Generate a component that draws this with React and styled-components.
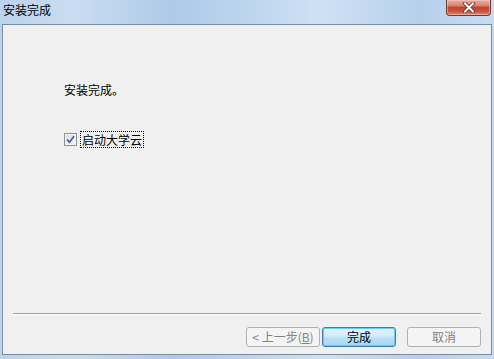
import React from 'react';
import styled, { createGlobalStyle } from 'styled-components';

const Global = createGlobalStyle`
  html, body { margin: 0; padding: 0; width: 494px; height: 359px; overflow: hidden; }
  body { font-family: "Noto Sans CJK SC", "Noto Sans", sans-serif; font-size: 12px; color: #000; }
`;

const Window = styled.div`
  width: 494px;
  height: 359px;
  box-sizing: border-box;
  display: flex;
  flex-direction: column;
  padding: 0 2px 4px 2px;
  background: linear-gradient(to right, #bcd3ec 0%, #c9dcf1 15%, #aecae8 35%, #bcd4ee 50%, #cfe1f4 65%, #b6cfeb 85%, #c8dcf1 100%);
`;

const TitleBar = styled.div`
  height: 24px;
  display: flex;
  justify-content: space-between;
  align-items: flex-start;
`;

const Title = styled.div`
  margin: 3px 0 0 1px;
  line-height: 14px;
  font-size: 12px;
  color: #000;
`;

const CloseButton = styled.div`
  width: 45px;
  height: 16px;
  margin-right: 1px;
  box-sizing: border-box;
  border: 1px solid #6b3b34;
  border-top: none;
  border-radius: 0 0 4px 4px;
  background: linear-gradient(to bottom, #e9a99c 0%, #d98a79 35%, #c6432b 50%, #c8533c 75%, #e08a72 100%);
  box-shadow: inset 0 0 0 1px rgba(255, 220, 210, 0.45);
  display: flex;
  align-items: center;
  justify-content: center;
`;

const Client = styled.div`
  flex: 1;
  display: flex;
  flex-direction: column;
  border: 1px solid #7b8c9d;
  background: #f0f0f0;
`;

const Body = styled.div`
  padding-left: 61px;
  display: flex;
  flex-direction: column;
  align-items: flex-start;
`;

const Message = styled.div`
  margin-top: 58px;
  line-height: 14px;
`;

const CheckRow = styled.div`
  margin-top: 34px;
  display: flex;
  align-items: center;
  height: 17px;
`;

const Box = styled.div`
  width: 13px;
  height: 13px;
  box-sizing: border-box;
  border: 1px solid #8e8f8f;
  background: linear-gradient(135deg, #d4d7dc 0%, #eef0f2 60%, #f8f8f8 100%);
  box-shadow: inset 0 0 0 1px #f4f4f4;
  display: flex;
  align-items: center;
  justify-content: center;
`;

const Label = styled.span`
  margin-left: 3px;
  padding: 0 1px;
  border: 1px dotted #000;
  line-height: 15px;
`;

const Separator = styled.div`
  margin: auto 10px 0 10px;
  border-top: 1px solid #a0a0a0;
  border-bottom: 1px solid #ffffff;
`;

const Footer = styled.div`
  display: flex;
  justify-content: flex-end;
  padding: 12px 10px 7px 0;
`;

const Button = styled.div`
  width: 74px;
  height: 20px;
  box-sizing: border-box;
  margin-left: ${p => p.$gap}px;
  border-radius: 3px;
  display: flex;
  align-items: center;
  justify-content: center;
  font-size: 12px;
  line-height: 14px;
  border: 1px solid ${p => (p.$primary ? '#3c7fb1' : '#adb2b5')};
  color: ${p => (p.$disabled ? '#838383' : '#000')};
  background: ${p =>
    p.$primary
      ? 'linear-gradient(to bottom, #e6f4fc 0%, #d3ecfb 45%, #b7e0f8 55%, #a6d6f3 100%)'
      : '#f4f4f4'};
  box-shadow: ${p => (p.$primary ? 'inset 0 0 0 1px #6ccaf2' : 'none')};
`;

const CheckIcon = () => (
  <svg width="9" height="9" viewBox="0 0 9 9">
    <path d="M1 4.5 L3.5 7.2 L8 1.2" fill="none" stroke="#4a5e9c" strokeWidth="1.8" />
  </svg>
);

const CloseIcon = () => (
  <svg width="14" height="11" viewBox="0 0 14 11">
    <path d="M3 1.5 L11 9.5 M11 1.5 L3 9.5" stroke="#5a2a22" strokeWidth="3.6" strokeLinecap="square" />
    <path d="M3 1.5 L11 9.5 M11 1.5 L3 9.5" stroke="#ffffff" strokeWidth="2" strokeLinecap="square" />
  </svg>
);

export default function App() {
  return (
    <>
      <Global />
      <Window>
        <TitleBar>
          <Title>安装完成</Title>
          <CloseButton>
            <CloseIcon />
          </CloseButton>
        </TitleBar>
        <Client>
          <Body>
            <Message>安装完成。</Message>
            <CheckRow>
              <Box>
                <CheckIcon />
              </Box>
              <Label>启动大学云</Label>
            </CheckRow>
          </Body>
          <Separator />
          <Footer>
            <Button $disabled $gap={0}>
              &lt; 上一步(<u>B</u>)
            </Button>
            <Button $primary $gap={2}>完成</Button>
            <Button $disabled $gap={11}>取消</Button>
          </Footer>
        </Client>
      </Window>
    </>
  );
}
